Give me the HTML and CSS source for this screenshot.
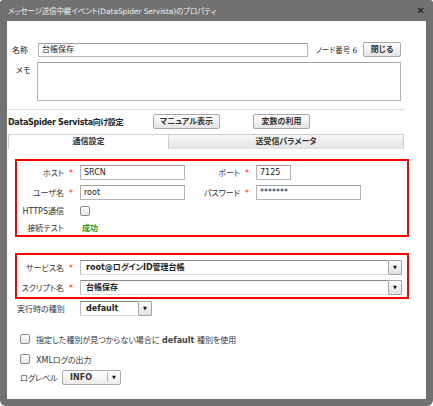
FILE: index.html
```html
<!DOCTYPE html>
<html>
<head>
<meta charset="utf-8">
<link rel="stylesheet" href="styles.css">
</head>
<body>
<div class="dialog">
  <div class="titlebar">
    <span class="title">メッセージ送信中継イベント(DataSpider Servista)のプロパティ</span>
    <span class="close">✕</span>
  </div>
  <div class="panel">
    <div class="row r-name">
      <span class="lbl-top">名称</span>
      <div class="input w-name">台帳保存</div>
      <span class="node">ノード番号 6</span>
      <div class="btn b-close">閉じる</div>
    </div>
    <div class="row r-memo">
      <span class="lbl-top lbl-memo">メモ</span>
      <div class="input memo"></div>
    </div>
    <div class="sep"></div>
    <div class="row r-sec">
      <span class="sec-title">DataSpider Servista向け設定</span>
      <div class="btn b-manual">マニュアル表示</div>
      <div class="btn b-var">変数の利用</div>
    </div>
    <div class="tabs">
      <div class="tab active">通信設定</div>
      <div class="tab">送受信パラメータ</div>
    </div>
    <div class="redbox box1">
      <div class="frow">
        <span class="flbl">ホスト<i class="star">*</i></span>
        <div class="input fin w-host">SRCN</div>
        <span class="flbl plbl">ポート<i class="star">*</i></span>
        <div class="input fin w-port">7125</div>
      </div>
      <div class="frow">
        <span class="flbl">ユーザ名<i class="star">*</i></span>
        <div class="input fin w-host">root</div>
        <span class="flbl plbl">パスワード<i class="star">*</i></span>
        <div class="input fin w-pass">*******</div>
      </div>
      <div class="frow r-chk">
        <span class="flbl">HTTPS通信<i class="star blank">*</i></span>
        <span class="chk"></span>
      </div>
      <div class="frow r-test">
        <span class="flbl">接続テスト<i class="star blank">*</i></span>
        <span class="ok">成功</span>
      </div>
    </div>
    <div class="redbox box2">
      <div class="frow">
        <span class="flbl">サービス名<i class="star">*</i></span>
        <div class="combo w-svc"><span class="cval">root@ログインID管理台帳</span><span class="cbtn">▼</span></div>
      </div>
      <div class="frow">
        <span class="flbl">スクリプト名<i class="star">*</i></span>
        <div class="combo w-svc"><span class="cval">台帳保存</span><span class="cbtn">▼</span></div>
      </div>
    </div>
    <div class="frow r-kind">
      <span class="flbl">実行時の種別<i class="star blank">*</i></span>
      <div class="combo w-kind"><span class="cval">default</span><span class="cbtn">▼</span></div>
    </div>
    <div class="crow c1"><span class="chk"></span><span>指定した種別が見つからない場合に <b class="def">default</b> 種別を使用</span></div>
    <div class="crow c2"><span class="chk"></span><span>XMLログの出力</span></div>
    <div class="crow c3">
      <span class="loglbl">ログレベル</span>
      <div class="sel"><span class="sval">INFO</span><span class="sbtn">▼</span></div>
    </div>
  </div>
</div>
</body>
</html>
```

FILE: styles.css
```css
html, body { margin: 0; padding: 0; background: #fff; }
body {
  font-family: "DejaVu Sans", "Noto Sans CJK JP", sans-serif;
  font-size: 8px;
  color: #222;
  font-feature-settings: "palt";
}
.dialog {
  width: 433px;
  height: 406px;
  background: #717171;
  border-radius: 3px 3px 6px 6px;
  overflow: hidden;
  display: flex;
  flex-direction: column;
}
.titlebar {
  height: 21px;
  display: flex;
  align-items: center;
  justify-content: space-between;
  padding: 0 8px 0 8px;
  box-sizing: border-box;
}
.title { color: #eeeeee; font-size: 7.5px; letter-spacing: -0.1px; }
.close { color: #111; font-weight: bold; font-size: 10px; margin-top: -1px; }
.panel {
  margin: 0 7px;
  height: 378px;
  background: #fff;
  position: relative;
}
.row { display: flex; align-items: center; }
.r-name { margin-top: 21px; height: 15px; }
.lbl-top { width: 26px; padding-left: 5px; flex: none; }
.input {
  box-sizing: border-box;
  border: 1px solid #b4b4b4;
  border-top-color: #a0a0a0;
  background: #fff;
  height: 14px;
  line-height: 12px;
  padding-left: 3px;
  font-size: 8px;
  white-space: nowrap;
}
.w-name { width: 270px; }
.node { margin-left: 8px; width: 47px; color: #333; white-space: nowrap; font-size: 7.5px; }
.btn {
  box-sizing: border-box;
  border: 1px solid #a8a8a8;
  border-radius: 2px;
  background: linear-gradient(#ffffff, #e4e4e4);
  height: 15px;
  line-height: 13px;
  text-align: center;
  font-weight: bold;
  color: #333;
  font-size: 8px;
  flex: none;
}
.b-close { width: 38px; }
.r-memo { margin-top: 5px; align-items: flex-start; }
.lbl-memo { padding-left: 9px; width: 21px; padding-top: 2px; }
.memo { width: 364px; height: 39px; }
.sep { margin-top: 8px; width: 398px; border-top: 1px solid #dedede; }
.r-sec { margin-top: 4px; height: 15px; }
.sec-title { padding-left: 1px; width: 145px; font-weight: bold; color: #222; letter-spacing: -0.3px; white-space: nowrap; }
.b-manual { width: 67px; }
.b-var { width: 57px; margin-left: 33px; }
.tabs { margin-top: 5px; margin-left: 1px; display: flex; height: 15px; }
.tab {
  box-sizing: border-box;
  height: 15px;
  line-height: 13px;
  text-align: center;
  font-weight: bold;
  color: #333;
  border: 1px solid #cfcfcf;
  border-bottom: none;
  background: linear-gradient(#f6f6f6, #e3e3e3);
  width: 236px;
}
.tab.active { width: 160px; background: #fff; border-right: none; }
.redbox {
  box-sizing: border-box;
  margin-left: 8px;
  width: 394px;
  border: 2px solid #ff0000;
}
.box1 { margin-top: 10px; height: 78px; padding-top: 4px; }
.box2 { margin-top: 16px; height: 46px; padding-top: 5px; }
.frow { display: flex; align-items: center; height: 15px; margin-bottom: 5px; }
.flbl { width: 56px; text-align: right; flex: none; white-space: nowrap; color: #333; }
.star { font-style: normal; color: #ff2020; margin-left: 5px; font-size: 8px; }
.star.blank { visibility: hidden; }
.fin { margin-left: 7px; height: 15px; line-height: 13px; }
.w-host { width: 105px; }
.plbl { width: 64px; }
.w-port { width: 35px; }
.w-pass { width: 105px; }
.r-chk { height: 11px; margin-bottom: 6px; }
.chk {
  box-sizing: border-box;
  display: inline-block;
  width: 10px;
  height: 10px;
  border: 1px solid #8c8c8c;
  border-radius: 2px;
  background: linear-gradient(#ffffff, #e6e6e6);
  flex: none;
}
.r-chk .chk { margin-left: 7px; }
.r-test { height: 11px; }
.ok { margin-left: 9px; color: #1e9a1e; font-weight: bold; }
.combo {
  margin-left: 7px;
  display: flex;
  height: 15px;
}
.cval {
  box-sizing: border-box;
  flex: 1;
  border-top: 1px solid #8a8a8a;
  border-left: 1px solid #bdbdbd;
  border-bottom: 1px solid #dcdcdc;
  padding-left: 5px;
  line-height: 13px;
  font-weight: bold;
  color: #222;
  white-space: nowrap;
}
.cbtn {
  box-sizing: border-box;
  width: 14px;
  border: 1px solid #a4a4a4;
  border-radius: 1px;
  background: linear-gradient(#ffffff, #e0e0e0);
  font-size: 5px;
  line-height: 13px;
  text-align: center;
  color: #111;
}
.w-svc { width: 322px; }
.r-kind { margin-top: 2px; margin-left: 10px; }
.w-kind { width: 72px; }
.crow { display: flex; align-items: center; margin-left: 13px; height: 12px; color: #333; }
.crow .chk { margin-right: 6px; }
.c1 { margin-top: 17px; }
.c2 { margin-top: 8px; }
.c3 { margin-top: 5px; height: 15px; }
.def { color: #444; font-family: "DejaVu Sans", sans-serif; }
.loglbl { width: 42px; }
.sel {
  box-sizing: border-box;
  display: flex;
  width: 59px;
  height: 15px;
  border: 1px solid #a8a8a8;
  border-radius: 2px;
  background: linear-gradient(#ffffff, #ececec);
}
.sval { width: 45px; padding-left: 7px; box-sizing: border-box; font-weight: bold; border-right: 1px solid #bbb; margin: 1px 0 2px; line-height: 11px; }
.sbtn { flex: 1; text-align: center; font-size: 5px; line-height: 13px; color: #111; }
```
